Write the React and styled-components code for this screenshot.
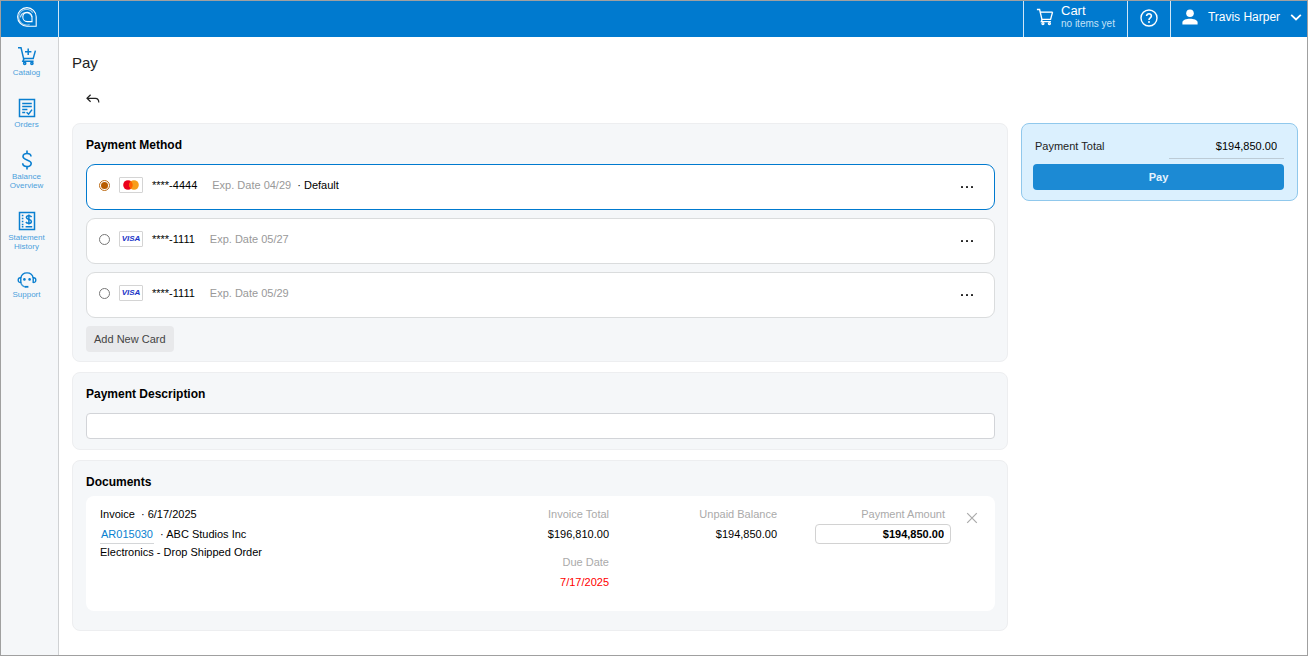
import React, { useState } from "react";
import styled, { createGlobalStyle } from "styled-components";

const cards = [
  { id: "mc-4444", brand: "mastercard", number: "****-4444", exp: "04/29", isDefault: true },
  { id: "visa-1111-27", brand: "visa", number: "****-1111", exp: "05/27" },
  { id: "visa-1111-29", brand: "visa", number: "****-1111", exp: "05/29" },
];

const GlobalStyle = createGlobalStyle`
  * {
    box-sizing: border-box;
  }

  body {
    margin: 0;
    background-color: #fff;
    color: #000;
    font-family: "Liberation Sans", Arial, sans-serif;
    font-size: 11px;
    line-height: 16px;
  }

  button,
  input {
    font-family: inherit;
    font-size: inherit;
    margin: 0;
  }

  svg {
    display: block;
    flex: none;
  }

  h1,
  h2,
  p {
    margin: 0;
  }
`;

const LogoIcon = () => (
  <svg width="20" height="20" viewBox="0 0 20 20" fill="none" stroke="#fff" strokeWidth="1.1">
    <path d="M19.2 19.2H9.8A9.3 9.3 0 1 1 19.2 9.8Z" />
    <path d="M12.6 17.4A7.8 7.8 0 1 1 15.8 5.6" opacity="0.6" />
    <path d="M15 14.6H10.2A4.6 4.6 0 1 1 15 10Z" />
    <path d="M3.4 10.4C4.4 4.6 12.6 3.6 15 10" opacity="0.8" />
  </svg>
);

const CartIcon = ({ plus, size = 20 }) => (
  <svg width={size} height={size} viewBox="0 0 20 20" fill="none" stroke="currentColor" strokeWidth="1.5">
    <path d="M1 1.7H4L6.6 12.6H16.2L18.4 4.6" />
    {plus ? <path d="M11.2 2.6V9M8 5.8H14.4" /> : <path d="M4.7 4.6H18.4" />}
    <path d="M7 12.6L5.9 15.2H16.6" />
    <circle cx="7.7" cy="17.3" r="1.1" />
    <circle cx="14.9" cy="17.3" r="1.1" />
  </svg>
);

const OrdersIcon = () => (
  <svg width="20" height="20" viewBox="0 0 20 20" fill="none" stroke="currentColor" strokeWidth="1.5">
    <rect x="2.5" y="1.5" width="15" height="17" />
    <path d="M5.2 5.5H14.8M5.2 8.5H14.8M5.2 11.5H10.4M5.2 14.5H8.2" />
    <path d="M9.6 14.2L11.6 16.2L15 11.6" />
  </svg>
);

const DollarIcon = () => (
  <svg width="20" height="20" viewBox="0 0 20 20" fill="none" stroke="currentColor" strokeWidth="1.6">
    <path d="M10 0.6V3.4M10 16.4V19.4" />
    <path d="M14 6.6C14 2.4 6 2.4 6 6.5C6 10.6 14.2 9.2 14.2 13.5C14.2 17.6 5.7 17.6 5.7 13.2" />
  </svg>
);

const StatementIcon = () => (
  <svg width="20" height="20" viewBox="0 0 20 20" fill="none" stroke="currentColor" strokeWidth="1.5">
    <rect x="2.5" y="1.5" width="15" height="17" />
    <path d="M4.8 4.5H6.4M4.8 7.5H6.4M4.8 10.5H6.4M4.8 13.5H6.4M4.8 15.8H6.4M8.6 15.8H15.2" />
    <path d="M11.9 3.6V13.4" />
    <path d="M14.6 6C13.4 4.2 9.4 4.4 9.4 6.6C9.4 9 14.4 7.9 14.4 10.4C14.4 12.8 10 12.8 8.9 11" />
  </svg>
);

const SupportIcon = () => (
  <svg width="20" height="16" viewBox="0 0 20 16" fill="none" stroke="currentColor" strokeWidth="1.4">
    <path d="M3.8 6C5 -0.8 15 -0.8 16.2 6" />
    <path d="M3.8 5.8V10.4C1.8 10.6 1.2 9.6 1.2 8.1C1.2 6.6 1.8 5.6 3.8 5.8Z" />
    <path d="M16.2 5.8V10.4C18.2 10.6 18.8 9.6 18.8 8.1C18.8 6.6 18.2 5.6 16.2 5.8Z" />
    <path d="M3.8 10.4C4.4 13 6 14.6 8.4 15" opacity="0.8" />
    <path d="M8 14.8H11.4" strokeWidth="1.8" />
    <circle cx="7.4" cy="7.4" r="1.3" fill="currentColor" stroke="none" />
    <circle cx="12.6" cy="7.4" r="1.3" fill="currentColor" stroke="none" />
  </svg>
);

const HelpIcon = () => (
  <svg width="18" height="18" viewBox="0 0 18 18" fill="none" stroke="#fff" strokeWidth="1.4">
    <circle cx="9" cy="9" r="8" />
    <path d="M6.6 7C6.6 3.9 11.5 4 11.4 7C11.4 8.8 9 8.8 9 10.9" strokeWidth="1.6" />
    <circle cx="9" cy="13" r="1" fill="#fff" stroke="none" />
  </svg>
);

const UserIcon = () => (
  <svg width="16" height="16" viewBox="0 0 16 16" fill="#fff">
    <circle cx="8" cy="4.3" r="3.8" />
    <path d="M0.4 15.5V13.4C0.4 10.8 4.6 9.7 8 9.7S15.6 10.8 15.6 13.4V15.5Z" />
  </svg>
);

const ChevronIcon = () => (
  <svg width="12" height="12" viewBox="0 0 12 12" fill="none" stroke="#fff" strokeWidth="1.8">
    <path d="M1.2 3.8L6 8.4L10.8 3.8" />
  </svg>
);

const BackIcon = () => (
  <svg width="14" height="10" viewBox="0 0 14 10" fill="none" stroke="#222" strokeWidth="1.2">
    <path d="M4.6 0.8L1 4.3L4.6 7.8" />
    <path d="M1 4.3H9.4C12 4.3 12.8 6 12.8 8.6" />
  </svg>
);

const DotsIcon = () => (
  <svg width="14" height="4" viewBox="0 0 14 4" fill="#222">
    <rect x="1" y="1" width="2" height="2" rx="0.6" />
    <rect x="6" y="1" width="2" height="2" rx="0.6" />
    <rect x="11" y="1" width="2" height="2" rx="0.6" />
  </svg>
);

const CloseIcon = () => (
  <svg width="12" height="12" viewBox="0 0 12 12" fill="none" stroke="#aaa" strokeWidth="1.2">
    <path d="M1.2 1.2L10.8 10.8M10.8 1.2L1.2 10.8" />
  </svg>
);

const MastercardMark = () => (
  <svg width="16" height="10" viewBox="0 0 16 10">
    <circle cx="5" cy="5" r="4.8" fill="#eb001b" />
    <circle cx="11" cy="5" r="4.8" fill="#f79e1b" />
    <path d="M8 1.3A4.8 4.8 0 0 1 8 8.7A4.8 4.8 0 0 1 8 1.3Z" fill="#ff5f00" />
  </svg>
);

const navItems = [
  { label: "Catalog", icon: <CartIcon plus /> },
  { label: "Orders", icon: <OrdersIcon /> },
  { label: "Balance Overview", icon: <DollarIcon /> },
  { label: "Statement History", icon: <StatementIcon /> },
  { label: "Support", icon: <SupportIcon /> },
];

const CardOption = ({ card, selected, onSelect }) => (
  <CardRow $selected={selected}>
    <CardLabel>
      <Radio name="card" checked={selected} onChange={() => onSelect(card.id)} />
      <Brand>{card.brand === "visa" ? "VISA" : <MastercardMark />}</Brand>
      <span>{card.number}</span>
      <Expiry>
        <Muted>Exp. Date {card.exp}</Muted>
        {card.isDefault && <span>&nbsp; · Default</span>}
      </Expiry>
    </CardLabel>
    <IconButton type="button" aria-label="Card actions">
      <DotsIcon />
    </IconButton>
  </CardRow>
);

const App = () => {
  const [selectedCard, setSelectedCard] = useState("mc-4444");
  const [description, setDescription] = useState("");
  const [amount, setAmount] = useState("$194,850.00");

  return (
    <>
      <GlobalStyle />
      <Frame>
        <TopBar>
          <LogoLink href="#" aria-label="Home">
            <LogoIcon />
          </LogoLink>
          <CartButton type="button">
            <CartIcon size={18} />
            <CartText>
              <CartTitle>Cart</CartTitle>
              <CartNote>no items yet</CartNote>
            </CartText>
          </CartButton>
          <HelpButton type="button" aria-label="Help">
            <HelpIcon />
          </HelpButton>
          <UserButton type="button">
            <UserIcon />
            <span>Travis Harper</span>
            <ChevronIcon />
          </UserButton>
        </TopBar>
        <Body>
          <Sidebar>
            {navItems.map((item) => (
              <NavLink href="#" key={item.label}>
                {item.icon}
                <NavLabel>{item.label}</NavLabel>
              </NavLink>
            ))}
          </Sidebar>
          <Page>
            <PageTitle>Pay</PageTitle>
            <Toolbar>
              <IconButton type="button" aria-label="Back">
                <BackIcon />
              </IconButton>
            </Toolbar>
            <Columns>
              <Panels>
                <Panel $bottom="9px">
                  <PanelTitle>Payment Method</PanelTitle>
                  <CardList>
                    {cards.map((card) => (
                      <CardOption
                        key={card.id}
                        card={card}
                        selected={card.id === selectedCard}
                        onSelect={setSelectedCard}
                      />
                    ))}
                    <AddButton type="button">Add New Card</AddButton>
                  </CardList>
                </Panel>
                <Panel>
                  <PanelTitle>
                    <label htmlFor="description">Payment Description</label>
                  </PanelTitle>
                  <DescriptionInput
                    id="description"
                    value={description}
                    onChange={(e) => setDescription(e.target.value)}
                  />
                </Panel>
                <Panel $gap="6px" $bottom="19px">
                  <PanelTitle>Documents</PanelTitle>
                  <Document>
                    <DocumentGrid>
                      <div>
                        <Line>Invoice &nbsp;· 6/17/2025</Line>
                        <Line>
                          <DocLink href="#">AR015030</DocLink> &nbsp;· ABC Studios Inc
                        </Line>
                        <p>Electronics - Drop Shipped Order</p>
                      </div>
                      <Figures>
                        <Figure>
                          <FigureName>Invoice Total</FigureName>
                          <Line>$196,810.00</Line>
                        </Figure>
                        <Figure>
                          <FigureName>Due Date</FigureName>
                          <Overdue>7/17/2025</Overdue>
                        </Figure>
                      </Figures>
                      <Figure>
                        <FigureName>Unpaid Balance</FigureName>
                        <Line>$194,850.00</Line>
                      </Figure>
                      <Figure>
                        <AmountLabel htmlFor="amount">Payment Amount</AmountLabel>
                        <AmountInput id="amount" value={amount} onChange={(e) => setAmount(e.target.value)} />
                      </Figure>
                    </DocumentGrid>
                    <RemoveButton type="button" aria-label="Remove document">
                      <CloseIcon />
                    </RemoveButton>
                  </Document>
                </Panel>
              </Panels>
              <Summary>
                <SummaryRow>
                  <TotalLabel htmlFor="total">Payment Total</TotalLabel>
                  <TotalInput id="total" value={amount} readOnly />
                </SummaryRow>
                <PayButton type="button">Pay</PayButton>
              </Summary>
            </Columns>
          </Page>
        </Body>
      </Frame>
    </>
  );
};

const Frame = styled.div`
  min-height: 100vh;
  display: flex;
  flex-direction: column;
  border: 1px solid #a0a0a0;
`;

const TopBar = styled.header`
  display: flex;
  height: 36px;
  background-color: #007acf;
  color: #fff;
`;

const LogoLink = styled.a`
  display: flex;
  align-items: center;
  justify-content: center;
  width: 58px;
  padding: 0 5px 4px 0;
  border-right: 1px solid #cfe6f7;
  margin-right: auto;
`;

const BarButton = styled.button`
  display: flex;
  align-items: center;
  padding: 0 0 4px;
  border: none;
  border-left: 1px solid #cfe6f7;
  background: none;
  color: #fff;
  cursor: pointer;
`;

const CartButton = styled(BarButton)`
  width: 104px;
  padding-left: 12px;
  gap: 7px;
`;

const CartText = styled.span`
  display: flex;
  flex-direction: column;
  align-items: flex-start;
  white-space: nowrap;
`;

const CartTitle = styled.span`
  font-size: 13px;
  line-height: 14px;
`;

const CartNote = styled.span`
  color: #c4e2f7;
  font-size: 10px;
  line-height: 12px;
`;

const HelpButton = styled(BarButton)`
  width: 43px;
  padding-bottom: 2px;
  justify-content: center;
`;

const UserButton = styled(BarButton)`
  width: 137px;
  padding-left: 11px;
  padding-right: 5px;
  justify-content: space-between;
  font-size: 12px;
`;

const Body = styled.div`
  display: flex;
  flex: 1;
`;

const Sidebar = styled.nav`
  display: flex;
  flex-direction: column;
  gap: 21px;
  flex: none;
  width: 58px;
  padding: 9px 6px 9px 0;
  border-right: 1px solid #d0d2d4;
  background-color: #f5f7f9;
`;

const NavLink = styled.a`
  display: flex;
  flex-direction: column;
  align-items: center;
  gap: 2px;
  color: #0a7fd0;
  text-decoration: none;
`;

const NavLabel = styled.span`
  width: 44px;
  color: #4b9fdc;
  font-size: 8px;
  line-height: 9px;
  text-align: center;
`;

const Page = styled.main`
  flex: 1;
  min-width: 0;
  padding: 16px 9px 20px 13px;
`;

const PageTitle = styled.h1`
  color: #222;
  font-size: 15px;
  font-weight: normal;
  line-height: 20px;
`;

const Toolbar = styled.div`
  display: flex;
  align-items: center;
  height: 50px;
  padding: 2px 14px 0;
`;

const IconButton = styled.button`
  padding: 0;
  border: none;
  background: none;
  cursor: pointer;
`;

const Columns = styled.div`
  display: grid;
  grid-template-columns: 1fr 277px;
  align-items: start;
  gap: 13px;
`;

const Panels = styled.div`
  display: flex;
  flex-direction: column;
  gap: 10px;
`;

const Panel = styled.section`
  display: flex;
  flex-direction: column;
  gap: ${(props) => props.$gap || "11px"};
  padding: 13px 12px ${(props) => props.$bottom || "10px"} 13px;
  border: 1px solid #edeef0;
  border-radius: 8px;
  background-color: #f5f7f9;
`;

const PanelTitle = styled.h2`
  font-size: 12px;
  line-height: 16px;
`;

const CardList = styled.div`
  display: flex;
  flex-direction: column;
  gap: 8px;
`;

const CardRow = styled.div`
  display: flex;
  align-items: center;
  justify-content: space-between;
  height: 46px;
  padding: 0 20px 0 12px;
  border: 1px solid ${(props) => (props.$selected ? "#007acf" : "#dadcdd")};
  border-radius: 9px;
  background-color: #fff;
`;

const CardLabel = styled.label`
  display: flex;
  align-items: center;
  gap: 9px;
  padding-bottom: 4px;
`;

const Radio = styled.input.attrs({ type: "radio" })`
  appearance: none;
  width: 11px;
  height: 11px;
  padding: 1px;
  border: 1px solid #777;
  border-radius: 50%;
  background-color: #fff;
  background-clip: content-box;

  &:checked {
    border-color: #bd6b14;
    background-color: #b85c00;
  }
`;

const Brand = styled.span`
  display: flex;
  align-items: center;
  justify-content: center;
  width: 24px;
  height: 16px;
  border: 1px solid #d4d4d4;
  border-radius: 1px;
  color: #1a34c8;
  font-size: 8px;
  font-style: italic;
  font-weight: bold;
`;

const Expiry = styled.span`
  padding-left: 6px;
`;

const Muted = styled.span`
  color: #999;
`;

const AddButton = styled.button`
  align-self: flex-start;
  height: 26px;
  padding: 0 8px;
  border: none;
  border-radius: 4px;
  background-color: #e8e9eb;
  color: #444;
  cursor: pointer;
`;

const DescriptionInput = styled.input`
  width: 100%;
  height: 26px;
  padding: 0 7px;
  border: 1px solid #d2d4d8;
  border-radius: 4px;
  background-color: #fff;
`;

const Document = styled.article`
  display: flex;
  align-items: flex-start;
  gap: 15px;
  padding: 8px 17px 19px 14px;
  border-radius: 8px;
  background-color: #fff;
`;

const DocumentGrid = styled.div`
  display: grid;
  flex: 1;
  grid-template-columns: 1fr 130px 130px 136px;
  gap: 38px;
`;

const Line = styled.p`
  line-height: 20px;
`;

const DocLink = styled.a`
  display: inline-block;
  padding: 0 1px;
  border-bottom: 1px solid #d4d6d8;
  color: #0a7fd0;
  line-height: 17px;
  text-decoration: none;
`;

const Figures = styled.div`
  display: flex;
  flex-direction: column;
  gap: 8px;
`;

const Figure = styled.div`
  text-align: right;
`;

const FigureName = styled(Line)`
  color: #aaa;
`;

const Overdue = styled(Line)`
  color: #f00;
`;

const AmountLabel = styled.label`
  display: block;
  padding-right: 6px;
  color: #aaa;
  line-height: 20px;
`;

const AmountInput = styled.input`
  display: block;
  width: 100%;
  height: 20px;
  padding: 0 6px;
  border: 1px solid #d2d2d2;
  border-radius: 4px;
  font-weight: bold;
  text-align: right;
`;

const RemoveButton = styled(IconButton)`
  padding-top: 8px;
`;

const Summary = styled.aside`
  display: flex;
  flex-direction: column;
  gap: 5px;
  padding: 10px 13px 10px 11px;
  border: 1px solid #90c8ec;
  border-radius: 8px;
  background-color: #dbf0fe;
`;

const SummaryRow = styled.div`
  display: flex;
  justify-content: space-between;
  align-items: center;
  padding-left: 2px;
  color: #222;
`;

const TotalLabel = styled.label`
  padding-bottom: 2px;
`;

const TotalInput = styled.input`
  width: 115px;
  height: 25px;
  padding: 0 7px;
  border: none;
  border-bottom: 1px solid #bccbd6;
  background: none;
  text-align: right;
`;

const PayButton = styled.button`
  height: 26px;
  border: none;
  border-radius: 4px;
  background-color: #1c8ad4;
  color: #e4f3fe;
  font-weight: bold;
  cursor: pointer;
`;

export default App;
